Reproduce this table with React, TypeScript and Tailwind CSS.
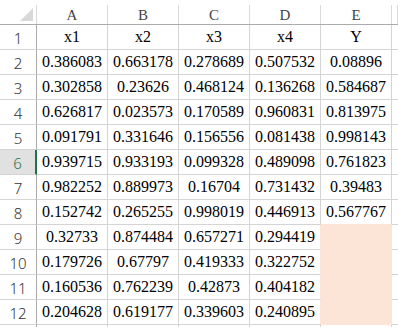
import React from "react";

const data: string[][] = [
  ["x1", "x2", "x3", "x4", "Y"],
  ["0.386083", "0.663178", "0.278689", "0.507532", "0.08896"],
  ["0.302858", "0.23626", "0.468124", "0.136268", "0.584687"],
  ["0.626817", "0.023573", "0.170589", "0.960831", "0.813975"],
  ["0.091791", "0.331646", "0.156556", "0.081438", "0.998143"],
  ["0.939715", "0.933193", "0.099328", "0.489098", "0.761823"],
  ["0.982252", "0.889973", "0.16704", "0.731432", "0.39483"],
  ["0.152742", "0.265255", "0.998019", "0.446913", "0.567767"],
  ["0.32733", "0.874484", "0.657271", "0.294419", ""],
  ["0.179726", "0.67797", "0.419333", "0.322752", ""],
  ["0.160536", "0.762239", "0.42873", "0.404182", ""],
  ["0.204628", "0.619177", "0.339603", "0.240895", ""],
  ["", "", "", "", ""],
];

const cols = ["A", "B", "C", "D", "E", ""];

const serif = { fontFamily: '"Liberation Serif", "Times New Roman", serif' };
const sans = { fontFamily: '"Noto Sans", "DejaVu Sans", sans-serif' };

export default function App() {
  return (
    <div className="w-[398px] h-[327px] overflow-hidden bg-white">
      <div className="grid grid-cols-[37px_repeat(5,71px)_1fr]">
        {/* corner */}
        <div className="flex h-[25px] border-b border-[#ababab]">
          <div className="relative flex-1">
            <svg width="36" height="24" className="block">
              <polygon points="33,8 33,21 20,21" fill="#d9d9d9" />
            </svg>
          </div>
          <div className="w-px mt-[5px] bg-[#dadada]" />
        </div>
        {cols.map((c, i) => (
          <div key={"h" + i} className="flex h-[25px] border-b border-[#ababab]">
            <div
              className="flex-1 text-center text-[15px] leading-[17px] pt-[7px] text-[#444444]"
              style={serif}
            >
              {c}
            </div>
            <div className="w-px mt-[5px] bg-[#dadada]" />
          </div>
        ))}
        {data.map((row, r) => {
          const rowNum = r + 1;
          const selected = rowNum === 6;
          return (
            <React.Fragment key={"r" + r}>
              <div
                className={
                  selected
                    ? "h-[25px] border-b border-[#d4d4d4] border-r-2 border-r-[#217346] bg-[#e1e1e1] text-[#217346] text-center text-[15px] font-light leading-[21px] pt-[3px]"
                    : "h-[25px] border-b border-[#d4d4d4] border-r border-r-[#ababab] text-[#333333] text-center text-[15px] font-light leading-[21px] pt-[3px]"
                }
                style={sans}
              >
                {rowNum <= 12 ? rowNum : ""}
              </div>
              {row.map((v, c) => {
                const peach = c === 4 && rowNum >= 9 && rowNum <= 12;
                const aboveP = c === 4 && rowNum === 8;
                const leftP = c === 3 && rowNum >= 9 && rowNum <= 12;
                let cls =
                  "h-[25px] border-r border-b text-center text-[16px] leading-[24px] text-black whitespace-nowrap overflow-hidden ";
                if (peach) cls += "bg-[#fce4d6] border-[#fce4d6]";
                else if (aboveP) cls += "border-r-[#d4d4d4] border-b-[#fce4d6]";
                else if (leftP) cls += "border-b-[#d4d4d4] border-r-[#fce4d6]";
                else cls += "border-[#d4d4d4]";
                return (
                  <div key={"c" + r + "_" + c} className={cls} style={serif}>
                    {v}
                  </div>
                );
              })}
              <div className="h-[25px] border-b border-[#d4d4d4]" />
            </React.Fragment>
          );
        })}
      </div>
    </div>
  );
}
